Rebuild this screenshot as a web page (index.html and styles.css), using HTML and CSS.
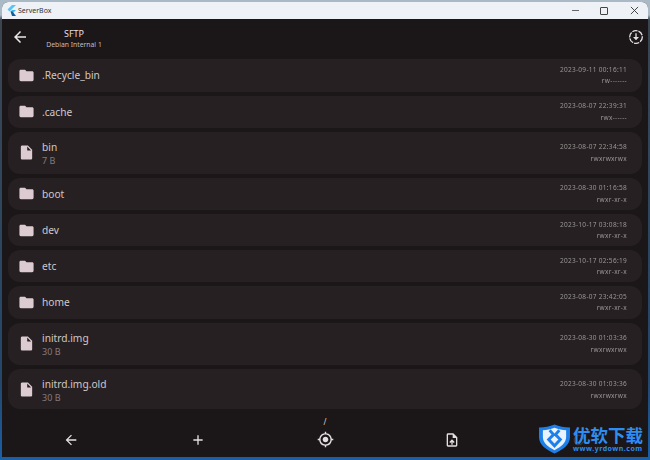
FILE: index.html
```html
<!DOCTYPE html>
<html lang="en">
<head>
    <meta charset="UTF-8">
    <meta name="viewport" content="width=device-width, initial-scale=1.0">
    <title>ServerBox</title>
    <link rel="stylesheet" href="styles.css">
</head>
<body>
    <svg class="icon-defs" width="0" height="0">
        <symbol id="folder" viewBox="0 0 24 24"><path d="M10 4H4c-1.100 0-2 .9-2 2v12c0 1.100.9 2 2 2h16c1.100 0 2-.9 2-2V8c0-1.100-.9-2-2-2h-8l-2-2z"/></symbol>
        <symbol id="file" viewBox="0 0 24 24"><path d="M14 2H6c-1.100 0-2 .9-2 2v16c0 1.100.9 2 2 2h12c1.100 0 2-.9 2-2V8l-6-6zm-1 7V3.500L18.500 9H13z"/></symbol>
    </svg>

    <div class="window">
        <div class="titlebar">
            <svg class="app-logo" viewBox="0 0 9 11" width="9" height="11">
                <path d="M5 0h4L2.500 6.500.5 4.500z" fill="#54c5f8"/>
                <path d="M5 5h4L5.500 8.500 3.500 6.500z" fill="#3fb4ee"/>
                <path d="M3.500 6.500l2 0 3.500 4.500H5z" fill="#0f5f9e"/>
            </svg>
            <span class="app-name">ServerBox</span>
            <div class="win-controls">
                <span class="win-min"></span>
                <span class="win-max"></span>
                <svg class="win-close" viewBox="0 0 10 10" width="9" height="9"><path d="M1 1l8 8M9 1l-8 8" stroke="#333" stroke-width="1" fill="none"/></svg>
            </div>
        </div>

        <header class="appbar">
            <svg class="back-icon" viewBox="0 0 24 24" width="18" height="18"><path d="M20 11H7.830l5.590-5.590L12 4l-8 8 8 8 1.410-1.410L7.830 13H20v-2z"/></svg>
            <div class="appbar-title">
                <div class="title-main">SFTP</div>
                <div class="title-sub">Debian Internal 1</div>
            </div>
            <svg class="download-icon" viewBox="0 0 24 24" width="16" height="16">
                <circle cx="12" cy="12" r="9.500" fill="none" stroke="#e6dfe2" stroke-width="2" stroke-dasharray="8 1.500"/>
                <path d="M11 6.500h2v5.500h3.500L12 17l-4.500-5H11z" fill="#e6dfe2"/>
            </svg>
        </header>

        <main class="file-list">
            <div class="row">
                <svg class="row-icon"><use href="#folder"/></svg>
                <div class="row-name"><div class="name">.Recycle_bin</div></div>
                <div class="row-meta"><div>2023-09-11 00:16:11</div><div>rw-------</div></div>
            </div>
            <div class="row">
                <svg class="row-icon"><use href="#folder"/></svg>
                <div class="row-name"><div class="name">.cache</div></div>
                <div class="row-meta"><div>2023-08-07 22:39:31</div><div>rwx------</div></div>
            </div>
            <div class="row row-file">
                <svg class="row-icon"><use href="#file"/></svg>
                <div class="row-name"><div class="name">bin</div><div class="size">7 B</div></div>
                <div class="row-meta"><div>2023-08-07 22:34:58</div><div>rwxrwxrwx</div></div>
            </div>
            <div class="row">
                <svg class="row-icon"><use href="#folder"/></svg>
                <div class="row-name"><div class="name">boot</div></div>
                <div class="row-meta"><div>2023-08-30 01:16:58</div><div>rwxr-xr-x</div></div>
            </div>
            <div class="row">
                <svg class="row-icon"><use href="#folder"/></svg>
                <div class="row-name"><div class="name">dev</div></div>
                <div class="row-meta"><div>2023-10-17 03:08:18</div><div>rwxr-xr-x</div></div>
            </div>
            <div class="row">
                <svg class="row-icon"><use href="#folder"/></svg>
                <div class="row-name"><div class="name">etc</div></div>
                <div class="row-meta"><div>2023-10-17 02:56:19</div><div>rwxr-xr-x</div></div>
            </div>
            <div class="row">
                <svg class="row-icon"><use href="#folder"/></svg>
                <div class="row-name"><div class="name">home</div></div>
                <div class="row-meta"><div>2023-08-07 23:42:05</div><div>rwxr-xr-x</div></div>
            </div>
            <div class="row row-file">
                <svg class="row-icon"><use href="#file"/></svg>
                <div class="row-name"><div class="name">initrd.img</div><div class="size">30 B</div></div>
                <div class="row-meta"><div>2023-08-30 01:03:36</div><div>rwxrwxrwx</div></div>
            </div>
            <div class="row row-file">
                <svg class="row-icon"><use href="#file"/></svg>
                <div class="row-name"><div class="name">initrd.img.old</div><div class="size">30 B</div></div>
                <div class="row-meta"><div>2023-08-30 01:03:36</div><div>rwxrwxrwx</div></div>
            </div>
        </main>

        <footer class="bottom">
            <div class="path">/</div>
            <div class="bottom-icons">
                <svg viewBox="0 0 24 24" width="16" height="16"><path d="M20 11H7.830l5.590-5.590L12 4l-8 8 8 8 1.410-1.410L7.830 13H20v-2z"/></svg>
                <svg viewBox="0 0 24 24" width="16" height="16"><path d="M19 13h-6v6h-2v-6H5v-2h6V5h2v6h6v2z"/></svg>
                <svg viewBox="0 0 24 24" width="17" height="17"><path d="M12 8c-2.210 0-4 1.790-4 4s1.790 4 4 4 4-1.790 4-4-1.790-4-4-4zm8.940 3A8.994 8.994 0 0 0 13 3.060V1h-2v2.060A8.994 8.994 0 0 0 3.060 11H1v2h2.060A8.994 8.994 0 0 0 11 20.940V23h2v-2.060A8.994 8.994 0 0 0 20.940 13H23v-2h-2.060zM12 19c-3.870 0-7-3.130-7-7s3.130-7 7-7 7 3.130 7 7-3.130 7-7 7z"/></svg>
                <svg viewBox="0 0 24 24" width="16" height="16"><path d="M14 2H6c-1.100 0-2 .9-2 2v16c0 1.100.9 2 2 2h12c1.100 0 2-.9 2-2V8l-6-6zm4 18H6V4h7v5h5v11zM8 15.010l1.410 1.410L11 14.840V19h2v-4.160l1.590 1.590L16 15.010 12.010 11 8 15.010z"/></svg>
                <svg viewBox="0 0 24 24" width="16" height="16"><path d="M17.650 6.350A7.958 7.958 0 0 0 12 4c-4.420 0-7.990 3.580-7.990 8s3.570 8 7.990 8c3.730 0 6.840-2.550 7.730-6h-2.080A5.990 5.990 0 0 1 12 18c-3.310 0-6-2.690-6-6s2.690-6 6-6c1.660 0 3.140.69 4.220 1.780L13 11h7V4l-2.350 2.350z"/></svg>
            </div>
        </footer>
    </div>

    <div class="watermark">
        <svg viewBox="0 0 32 30" width="31" height="30">
            <path d="M16 0c5 2 10 3 16 3v10c0 8-7 13-16 17C7 26 0 21 0 13V3c6 0 11-1 16-3z" fill="#1f7fe8"/>
            <path d="M16 3.500c4 1.500 8 2.300 12 2.500v7c0 6-5 10-12 13.500C9 23 4 19 4 13V6c4-.2 8-1 12-2.500z" fill="#e8f3ff"/>
            <path d="M11 6l4 4.500-5 5 6 6.500 6-6.500-5-5L21 6" fill="none" stroke="#1f7fe8" stroke-width="3"/>
        </svg>
        <div class="watermark-text">
            <div class="wm-cn">优软下载</div>
            <div class="wm-url">www.yrdown.com</div>
        </div>
    </div>
</body>
</html>
```

FILE: styles.css
```css
html, body {
    margin: 0;
    padding: 0;
    height: 100%;
}

body {
    width: 650px;
    height: 460px;
    overflow: hidden;
    background: linear-gradient(#a9bac6 0, #a9bac6 15px, #3b4550 20px, #24476b 380px, #1a5fa8 460px);
    font-family: 'Noto Sans', sans-serif;
    position: relative;
}

.icon-defs {
    position: absolute;
}

.window {
    height: 455px;
    margin: 2px 2px 0 2px;
    border-radius: 6px 6px 0 0;
    overflow: hidden;
    background-color: #1b1618;
    display: flex;
    flex-direction: column;
}

.titlebar {
    height: 17px;
    flex: none;
    display: flex;
    align-items: center;
    padding: 0 9.500px 0 5px;
    background-color: #eef2f6;
}

.app-logo {
    margin-right: 2px;
}

.app-name {
    font-size: 7px;
    color: #333;
}

.win-controls {
    margin-left: auto;
    display: flex;
    align-items: center;
    gap: 21.500px;
}

.win-min {
    width: 7px;
    height: 1px;
    background-color: #666;
}

.win-max {
    width: 6px;
    height: 6px;
    border: 1px solid #444;
    border-radius: 1px;
}

.appbar {
    height: 36px;
    flex: none;
    display: flex;
    align-items: center;
    padding: 0 4px 0 9px;
}

.back-icon {
    fill: #ece6e8;
}

.appbar-title {
    width: 90px;
    padding-top: 2px;
    text-align: center;
}

.title-main {
    font-size: 9px;
    line-height: 13px;
    color: #e6dfe2;
}

.title-sub {
    font-size: 6.800px;
    line-height: 10px;
    color: #c5bdc0;
}

.download-icon {
    margin-left: auto;
}

/* last row is cut off by the scroll area */
.file-list {
    box-sizing: border-box;
    flex: none;
    height: 354px;
    margin: 0 6px;
    padding-top: 4.400px;
    display: flex;
    flex-direction: column;
    gap: 4px;
    overflow: hidden;
    border-radius: 0 0 12px 12px;
}

.row {
    height: 32.200px;
    flex: none;
    display: flex;
    align-items: center;
    padding: 0 15px 0 10px;
    background-color: #272022;
    border-radius: 12px;
}

.row-file {
    height: 42px;
}

.row-icon {
    width: 17px;
    height: 17px;
    flex: none;
    fill: #dccbd0;
}

.row-name {
    margin-left: 7px;
    padding-top: 1px;
}

.row-file .row-name {
    padding-top: 2px;
}

.name {
    font-size: 10.200px;
    line-height: 13px;
    color: #cfc8ca;
}

.size {
    font-size: 9px;
    line-height: 13px;
    color: #837b7e;
}

.row-meta {
    margin-left: auto;
    text-align: right;
    font-size: 6.500px;
    line-height: 11.500px;
    letter-spacing: 0.300px;
    color: #9a9696;
    will-change: opacity;
}

.bottom {
    flex: 1;
    display: flex;
    flex-direction: column;
    align-items: center;
}

.path {
    margin-top: 7px;
    font-size: 8px;
    line-height: 11px;
    color: #d8d0d3;
}

.bottom-icons {
    box-sizing: border-box;
    width: 100%;
    margin-top: 4px;
    padding: 0 5.500px;
    display: grid;
    grid-template-columns: repeat(5, 1fr);
    justify-items: center;
    align-items: center;
}

.bottom-icons svg {
    fill: #e6dfe2;
}

.watermark {
    position: absolute;
    left: 539px;
    top: 424px;
    display: flex;
    gap: 3px;
    align-items: center;
    background-color: rgba(27, 22, 24, 0.85);
}

.wm-cn {
    font-family: 'Noto Sans CJK SC', sans-serif;
    font-weight: 700;
    font-size: 17.500px;
    line-height: 20px;
    color: #2f8df0;
}

.wm-url {
    font-size: 7px;
    line-height: 8px;
    font-weight: 700;
    letter-spacing: 0.500px;
    color: #2f8df0;
}
```
